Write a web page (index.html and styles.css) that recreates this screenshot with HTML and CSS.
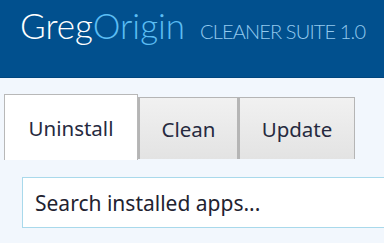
FILE: index.html
```html
<!DOCTYPE html>
<html>
<head>
<meta charset="utf-8">
<link rel="stylesheet" href="styles.css">
</head>
<body>
<header class="header">
  <span class="brand"><span class="brand-greg">Greg</span><span class="brand-origin">Origin</span></span>
  <span class="subtitle">CLEANER SUITE 1.0</span>
</header>
<nav class="tabs">
  <div class="tab tab-active">Uninstall</div>
  <div class="tab tab-clean">Clean</div>
  <div class="tab tab-update">Update</div>
</nav>
<div class="search-wrap">
  <div class="search">Search installed apps...</div>
</div>
</body>
</html>
```
FILE: styles.css
```css
html, body {
  margin: 0;
  padding: 0;
}
body {
  background: #f2f7fd;
  font-family: "Noto Sans", "Open Sans", sans-serif;
  overflow: hidden;
  width: 384px;
  height: 243px;
}
.header {
  height: 78px;
  box-sizing: border-box;
  background: #01508e;
  border-bottom: 1px solid #00467e;
  padding: 8px 0 0 20px;
  display: flex;
  align-items: baseline;
  gap: 15px;
  white-space: nowrap;
}
.brand {
  font-family: "Lato", "Noto Sans", sans-serif;
  font-size: 35px;
  line-height: 34px;
  font-weight: 300;
}
.brand-greg { color: #ffffff; }
.brand-origin { color: #5bbdf3; }
.subtitle {
  font-family: "Lato", "Noto Sans", sans-serif;
  font-size: 20px;
  font-weight: 300;
  letter-spacing: -0.85px;
  color: #93caee;
}
.tabs {
  display: flex;
  align-items: flex-start;
  padding-left: 4px;
  margin-top: 16px;
}
.tab {
  box-sizing: border-box;
  display: flex;
  align-items: center;
  justify-content: center;
  font-size: 20.5px;
  color: #262a40;
  border: 1px solid #b5b5b5;
  border-bottom: none;
  background: linear-gradient(#f1f1f1, #e3e3e3);
  height: 62px;
  margin-top: 3px;
}
.tab + .tab { border-left: 2px solid #b5b5b5; }
.tab-active {
  width: 134px;
  height: 66px;
  margin-top: 0;
  background: #ffffff;
  border-color: #b8b8b8;
}
.tab-clean { width: 100px; border-left: none; }
.tab-update { width: 117px; }
.search-wrap {
  padding-left: 22px;
  margin-top: 17px;
}
.search {
  height: 51px;
  box-sizing: border-box;
  background: #ffffff;
  border: 1px solid #a9d9eb;
  border-right: none;
  padding-left: 12px;
  display: flex;
  align-items: center;
  font-size: 21px;
  color: #222230;
}
```
